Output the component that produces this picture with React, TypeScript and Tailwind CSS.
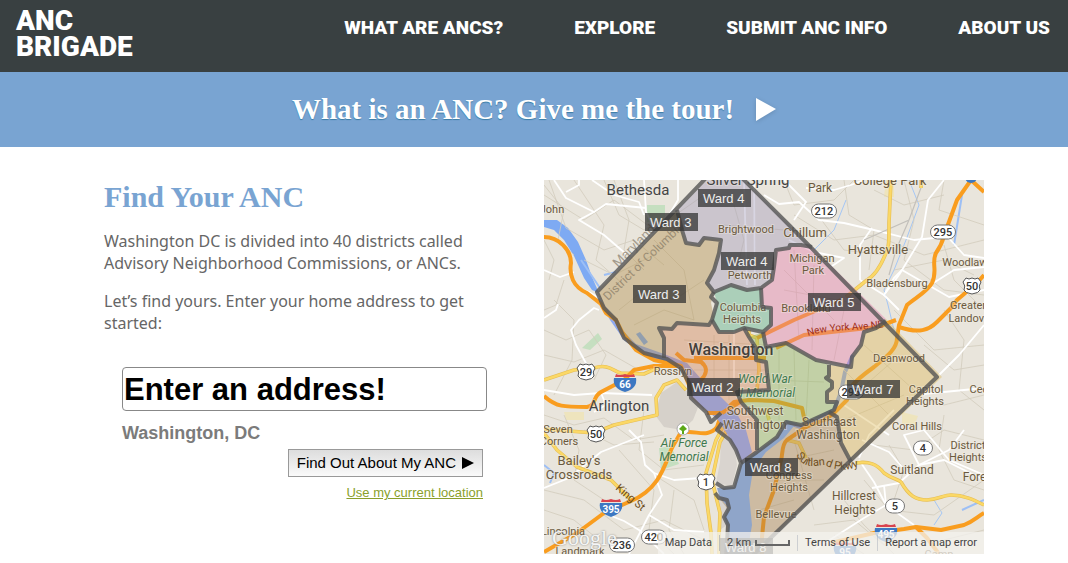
import React from 'react';

const NAV_LINKS = ['WHAT ARE ANCS?', 'EXPLORE', 'SUBMIT ANC INFO', 'ABOUT US'];

const LOCAL_STREETS = [
  'M0 15L40 40L70 20L110 50L160 15', 'M5 0L22 48L60 70L90 60L120 85', 'M30 0L60 45L52 80L80 105', 'M60 0L75 35L100 50L130 30',
  'M0 150L22 160L45 150L62 175L50 200', 'M0 175L30 182L60 170L95 190', 'M10 120L30 140L28 180L10 215', 'M0 235L30 245L60 238L90 260L120 255',
  'M20 235L35 270L30 300L60 320', 'M0 310L40 320L80 350L120 340L160 360', 'M100 230L95 270L120 290L160 285', 'M75 270L110 310L105 350L130 374',
  'M110 295L150 320L160 350', 'M240 0L250 25L290 20L310 0', 'M250 35L290 60L330 55L380 75L440 60', 'M300 0L305 35L330 50L325 90',
  'M360 0L370 40L360 80L400 110L440 115', 'M400 0L395 30L440 45', 'M350 90L400 80L430 95', 'M350 130L390 170L440 165', 'M400 130L420 160L415 210L440 230',
  'M370 215L400 225L440 215', 'M330 265L370 270L400 250L440 260', 'M320 300L345 330L390 335L440 300', 'M300 320L320 345L350 374',
  'M345 265L360 290L350 320', 'M270 345L310 340L340 365', 'M400 235L395 270L410 300L440 310', 'M75 130L100 110L130 120L160 100',
  'M90 145L120 130L150 140', 'M190 25L200 60L190 100', 'M210 20L212 100', 'M180 45L240 50', 'M240 90L290 140', 'M250 70L255 160', 'M270 85L268 170',
  'M240 110L320 125', 'M300 130L290 180', 'M140 160L220 165', 'M150 190L222 190', 'M170 155L170 210', 'M185 155L185 220', 'M235 170L235 240',
  'M250 170L252 240', 'M265 180L262 240', 'M225 200L280 202', 'M300 190L350 240', 'M320 165L370 210', 'M310 215L350 180', 'M300 240L360 215',
  'M220 285L290 270', 'M230 300L280 300', 'M250 260L270 330', 'M215 330L250 320', 'M0 5L20 30L14 60L30 75', 'M40 80L70 95L110 75', 'M20 100L12 125L0 130',
  'M70 0L85 40L80 70L100 90', 'M110 60L140 90L150 140', 'M0 60L10 80L5 100', 'M40 250L70 265L110 262', 'M0 330L30 340L55 360', 'M130 310L125 350L140 374',
  'M270 30L300 70L340 75', 'M330 10L360 25L400 15', 'M400 65L410 100L440 130', 'M380 165L410 190L440 185', 'M290 355L320 374', 'M400 360L440 350',
];

const WHITE_ROADS = [
  'M10 0L22 18L42 28L50 32L35 40L60 55L82 74', 'M22 12L35 5L35 0', 'M50 32L62 24L102 28', 'M48 0L70 15L95 22L100 35', 'M100 0L102 32L110 48',
  'M134 0L134 20L125 35', 'M0 90L16 97L30 92', 'M32 107L45 112L55 118', 'M0 138L12 130L14 124', 'M55 130L50 128L35 140L27 150L32 165L43 185',
  'M0 210L30 215L57 213L108 215', 'M57 213L62 225L50 232', 'M0 308L25 298L57 272L100 255', 'M85 250L97 262L101 285L110 293L118 315L105 335L85 374',
  'M110 293L130 300L157 298', 'M60 333L80 341L95 350L120 374', 'M105 335L130 350L160 352', 'M220 15L235 24L255 22L275 40L300 43L330 50L370 60L400 57',
  'M240 0L262 22L250 40', 'M262 8L290 10L307 5L320 0', 'M400 0L384 20L378 57L355 95', 'M328 48L316 65L316 100', 'M285 88L300 78L270 72L245 60',
  'M316 100L340 115L350 98L358 90L405 117L440 110', 'M355 95L340 115L355 130', 'M402 55L420 75L440 78', 'M383 107L410 90L440 87',
  'M440 145L415 175L393 197L380 215', 'M378 214L400 212L440 208', 'M315 278L325 255L350 230', 'M315 280L330 302L342 325L370 345',
  'M328 308L355 303L375 285L405 270L420 250', 'M375 285L400 280L440 300', 'M318 260L345 272L365 295', 'M340 305L342 325L320 338L270 370',
  'M375 285L360 255L380 250L405 280L440 295',
  'M210 0L211 105', 'M200 0L203 105', 'M190 150L190 200', 'M300 225L330 245L345 255',
];

const YELLOW_ROADS = [
  'M347 0L345 43C345 60 345 68 342 73C336 88 330 96 323 100L302 117',
  'M312 283C325 281 333 284 340 293C348 299 354 299 357 302C365 316 372 320 383 320C395 319 400 315 407 315C420 315 430 320 440 325',
  'M0 200L30 190L50 188C65 183 70 192 77 193L100 194L113 188', 'M0 253L13 270L33 287L67 300L87 320',
  'M0 249L50 253L70 245L113 235L112 218L120 205L133 200L142 210', 'M180 245L172 260L162 293L163 323L167 353L168 374',
  'M183 250L176 262L168 300L176 333L175 357L175 374', 'M213 158L205 155L205 150', 'M213 158L215 190L213 210', 'M222 228L225 240',
  'M243 260L255 263L262 278', 'M377 0L377 8',
];

const HIGHWAYS = [
  'M0 57C15 57 27 70 27 83C25 95 29 107 43 113L57 124L62 133L72 140L78 152L92 170L110 180L137 186',
  'M0 216C12 227 20 227 43 227C53 225 48 217 57 212L80 200L90 190L110 186L137 186L145 205L165 226L178 233L173 247C165 257 155 252 145 252L137 252C133 260 130 263 127 270C120 287 115 309 87 321L60 333L33 353L0 372',
  'M178 233L190 222L205 220L230 221L258 228L262 247L243 260C237 265 239 275 237 280L230 310L220 337L218 357L218 374',
  'M262 247L280 240L290 233L303 220C305 211 302 207 330 187C345 175 353 168 353 158L355 145L363 125C371 118 383 112 388 103C394 91 387 83 392 73C401 60 399 55 402 50L413 20L427 0L440 12',
  'M355 147C375 154 385 150 393 142L407 128L413 120L433 103L440 95',
  'M287 363L330 353L360 349L372 347L397 350L420 345C430 341 434 336 440 333', 'M372 347L383 358L395 374', 'M150 178L222 178',
  'M132 173L140 180L157 182C165 188 162 195 157 200', 'M213 158L250 140L297 120', 'M232 168L260 155L333 147L352 140', 'M160 185L153 177',
];

const WARDS = [
  { id: 'w3', fill: '#af8c46', d: 'M53 112L133 30L138 50L142 63L155 65L160 58L177 60L175 73L170 90L163 103L170 112L167 123L170 137L165 145L133 143L128 149L115 148L120 158L120 178L100 173L80 158L72 140L60 128Z' },
  { id: 'w4', fill: '#9d96b6', d: 'M133 30L163 0L200 0L268 67L257 65L246 67L232 70L230 87L228 100L217 108L203 110L187 105L170 112L163 103L170 90L175 73L177 60L160 58L155 65L142 63Z' },
  { id: 'w5', fill: '#e47aaa', d: 'M232 70L246 67L257 65L268 67L342 139L332 148L320 152L317 165L308 177L307 187L272 180L242 163L222 167L219 153L227 145L227 128L218 127L217 108L228 100L230 87Z' },
  { id: 'w1', fill: '#4eaf84', d: 'M170 112L187 105L203 110L217 108L218 127L227 128L227 145L219 152L200 148L190 152L175 152L168 140L173 123Z' },
  { id: 'w2', fill: '#d28252', d: 'M115 148L128 149L133 143L165 145L168 140L175 152L190 152L200 148L205 157L212 168L212 180L222 182L225 210L193 212L197 222L213 240L213 271L197 283L192 270L186 260L173 250L178 233L162 232L147 218L145 203L137 188L120 178L120 158Z' },
  { id: 'w6', fill: '#87b255', d: 'M205 157L219 152L222 167L242 163L272 180L285 185L285 196L288 202L288 208L283 212L283 222L293 222L290 230L257 245L242 242L233 257L213 271L213 240L197 222L193 212L225 210L222 182L212 180L212 168Z' },
  { id: 'w7', fill: '#dcb655', d: 'M342 139L398 197L307 282L297 263L293 235L290 230L293 222L283 222L283 212L288 208L288 202L285 196L285 185L307 187L308 177L317 165L320 152L332 148Z' },
  { id: 'w8', fill: '#a37d4b', d: 'M290 230L293 235L297 263L307 282L211 374L182 374L182 347L183 328L175 318L180 308L190 307L197 283L233 257L242 242L257 245Z' },
];

const WARD_BORDERS = [
  'M163 -3L53 112L60 128L72 140L80 158L100 173L123 179L137 188L145 203L147 218L162 232L167 242L177 233',
  'M197 -3L246 46L320 122L393 197L340 248L206 378',
  'M133 30L138 50L142 63L155 65L160 58L177 60L175 73L170 90L163 103L170 112L187 105L203 110L217 108L228 100L230 87L232 70L245 68L246 65L257 65L268 67',
  'M170 112L167 117L173 123L168 140L165 145L133 143L128 149L115 148L120 158L120 178', 'M168 140L175 152L190 152L200 148L219 152L227 145L227 128L218 127L217 108',
  'M219 152L222 167L242 163L272 180L307 187L308 177L317 165L320 152L332 148L342 141', 'M200 148L205 157L212 168L212 180L222 182L225 210L193 212L197 222L213 240L213 270',
  'M285 185L285 196L282 198L288 202L288 208L283 212L283 222L293 222L290 230L257 245L242 242L233 257L213 272L197 283',
  'M285 232L293 237L297 263L307 282', 'M178 243L173 250L186 260L192 270L197 283L190 307L180 308L172 303', 'M171 313L175 318L183 320L185 328L180 337L184 345L182 378',
];

interface PlaceLabel {
  x: number;
  y: number;
  text: string;
  size?: number;
  color?: string;
  italic?: boolean;
  weight?: number;
}

const TOWN = '#6b5a3e';
const PARK = '#3f7a4f';

const PLACES: PlaceLabel[] = [
  { x: 94, y: 15, text: 'Bethesda', size: 15, color: '#444' },
  { x: 204, y: 5, text: 'Silver Spring', size: 15, color: '#444' },
  { x: 8, y: 33, text: 'John' },
  { x: 202, y: 53, text: 'Brightwood' },
  { x: 276, y: 12, text: 'Park', size: 12 },
  { x: 346, y: 5, text: 'College Park', size: 13 },
  { x: 261, y: 57, text: 'Chillum', size: 13 },
  { x: 334, y: 74, text: 'Hyattsville', size: 13 },
  { x: 268, y: 82, text: 'Michigan' },
  { x: 269, y: 94, text: 'Park' },
  { x: 206, y: 99, text: 'Petworth' },
  { x: 353, y: 107, text: 'Bladensburg' },
  { x: 424, y: 86, text: 'Woodlawn' },
  { x: 424, y: 129, text: 'Greater' },
  { x: 427, y: 142, text: 'Landover' },
  { x: 199, y: 131, text: 'Columbia' },
  { x: 198, y: 143, text: 'Heights' },
  { x: 262, y: 132, text: 'Brookland' },
  { x: 187, y: 175, text: 'Washington', size: 16, color: '#443f3a', weight: 500 },
  { x: 129, y: 195, text: 'Rosslyn' },
  { x: 75, y: 231, text: 'Arlington', size: 15, color: '#444' },
  { x: 221, y: 203, text: 'World War', size: 12, color: PARK, italic: true },
  { x: 222, y: 217, text: 'II Memorial', size: 12, color: PARK, italic: true },
  { x: 211, y: 235, text: 'Southwest', size: 12 },
  { x: 211, y: 249, text: 'Washington', size: 12 },
  { x: 285, y: 246, text: 'Southeast', size: 12 },
  { x: 284, y: 259, text: 'Washington', size: 12 },
  { x: 355, y: 182, text: 'Deanwood' },
  { x: 382, y: 213, text: 'Capitol' },
  { x: 381, y: 225, text: 'Heights' },
  { x: 440, y: 213, text: 'Cedar' },
  { x: 373, y: 250, text: 'Coral Hills' },
  { x: 424, y: 269, text: 'District' },
  { x: 424, y: 281, text: 'Heights' },
  { x: 446, y: 301, text: 'Forestville', size: 12 },
  { x: 368, y: 294, text: 'Suitland', size: 12 },
  { x: 310, y: 320, text: 'Hillcrest', size: 12 },
  { x: 311, y: 334, text: 'Heights', size: 12 },
  { x: 14, y: 253, text: 'Seven' },
  { x: 15, y: 265, text: 'Corners' },
  { x: 35, y: 285, text: "Bailey's", size: 13 },
  { x: 35, y: 299, text: 'Crossroads', size: 13 },
  { x: 140, y: 267, text: 'Air Force', size: 12, color: PARK, italic: true },
  { x: 140, y: 281, text: 'Memorial', size: 12, color: PARK, italic: true },
  { x: 245, y: 299, text: 'Congress' },
  { x: 245, y: 311, text: 'Heights' },
  { x: 232, y: 338, text: 'Bellevue' },
  { x: 19, y: 355, text: 'Lincolnia' },
  { x: 36, y: 375, text: 'Landmark' },
  { x: 395, y: 378, text: 'Camp' },
];

const ROUTE_PILLS = [
  { x: 280, y: 31, text: '212' },
  { x: 399, y: 52, text: '295' },
  { x: 307, y: 212, text: '295' },
  { x: 379, y: 268, text: '4' },
  { x: 351, y: 326, text: '5' },
  { x: 78, y: 365, text: '236' },
  { x: 110, y: 357, text: '420' },
];

const US_SHIELDS = [
  { x: 428, y: 106, text: '50' },
  { x: 42, y: 192, text: '29' },
  { x: 52, y: 254, text: '50' },
  { x: 162, y: 302, text: '1' },
];

const INTERSTATES = [
  { x: 81, y: 203, text: '66' },
  { x: 67, y: 328, text: '395' },
  { x: 342, y: 353, text: '495' },
  { x: 301, y: 371, text: '95' },
];

const WARD_LABELS = [
  { x: 154, y: 9, text: 'Ward 4' },
  { x: 101, y: 33, text: 'Ward 3' },
  { x: 177, y: 72, text: 'Ward 4' },
  { x: 89, y: 105, text: 'Ward 3' },
  { x: 264, y: 113, text: 'Ward 5' },
  { x: 143, y: 198, text: 'Ward 2' },
  { x: 303, y: 200, text: 'Ward 7' },
  { x: 201, y: 278, text: 'Ward 8' },
  { x: 176, y: 358, text: 'Ward 8' },
];

const MapDrawing: React.FC = () => (
  <svg
    viewBox="0 0 440 374"
    className="block w-full font-['Roboto',sans-serif]"
    role="img"
    aria-label="Map of the wards of Washington DC"
  >
    <rect width="440" height="374" fill="#e9e5dc" />

    {/* Parks, built-up areas and water */}
    <path d="M103 25h18v17h-18zM38 168l16-15 4 6-12 11zM115 268l12-2 8 18-18 6z" fill="#c5dfc0" />
    <path d="M342 0h8v17h-10zM20 232h20v8H22zM358 232l16 4-4 10-12-2z" fill="#f2e2a8" opacity="0.6" />
    <path d="M117 213L133 202L146 214L155 225L149 240L138 250L120 247L111 235Z" fill="#d6d1ca" />
    <path d="M0 40L13 40L24 48L34 62L42 80L48 97L55 113L48 110L40 98L30 76L20 60L10 50L0 47Z" fill="#7eaaf3" />
    <path d="M37 80L56 108M60 95l12-3M0 285l10 8 -4 10M410 65l8-50M418 330l22-10" fill="none" stroke="#9dbff5" strokeWidth="2" />
    <path d="M52 114L64 130L76 148L92 164L120 174L143 183L158 200L160 212L160 230L147 216L144 198L132 187L100 176L80 160L66 140Z" fill="#8fa9ee" />
    <path d="M242 242L257 247L290 230L297 212L301 192L309 175" fill="none" stroke="#86a5ea" strokeWidth="4" />
    <path d="M177 258L190 262L193 285L188 306L172 303L176 282ZM175 320L184 322L183 345L176 350Z" fill="#d9d4cf" />
    <path d="M365 0L375 25L362 60L350 90L340 110L344 125L350 150L357 162M302 20L290 50L270 70M390 320L398 333L390 345" fill="none" stroke="#a4c6f5" strokeWidth="1" />
    <path d="M92 154l4-2 8 10-4 3z" fill="#7eaaf3" />

    {/* Roads */}
    {LOCAL_STREETS.map((d) => (
      <path key={d} d={d} fill="none" stroke="#d2cbbd" strokeWidth="0.8" />
    ))}
    {WHITE_ROADS.map((d) => (
      <path key={d} d={d} fill="none" stroke="#fff" strokeWidth="1.8" strokeLinejoin="round" />
    ))}
    <path d="M365 40L352 70L345 95M378 5L365 40L320 60" fill="none" stroke="#c3c0bb" strokeWidth="1.2" />
    {YELLOW_ROADS.map((d) => (
      <g key={d} fill="none" strokeLinejoin="round">
        <path d={d} stroke="#e5bd55" strokeWidth="3.6" />
        <path d={d} stroke="#fbd866" strokeWidth="2.4" />
      </g>
    ))}
    {HIGHWAYS.map((d) => (
      <path key={d} d={d} fill="none" stroke="#f99d1f" strokeWidth="4" strokeLinejoin="round" />
    ))}

    {/* Ward fills, with the rivers that run through them */}
    {WARDS.map((w) => (
      <path key={w.id} d={w.d} fill={w.fill} fillOpacity="0.4" />
    ))}
    <path d="M149 206L162 204L178 218L192 232L202 250L208 272L197 283L191 268L182 252L174 240L160 228L149 216Z" fill="#9f9fca" />
    <path d="M197 283L233 257L242 243L250 246L240 258L222 272L209 290L205 315L208 345L203 374L182 374L184 347L180 337L185 328L176 318L173 308L190 307Z" fill="#8fa5c9" />
    <path d="M163 233L178 233M196 222L178 233" fill="none" stroke="#e8912f" strokeWidth="4" />

    {/* Place names */}
    {PLACES.map((p) => (
      <text
        key={`${p.text}-${p.x}-${p.y}`}
        x={p.x}
        y={p.y}
        fontSize={p.size ?? 11}
        fontWeight={p.weight ?? 400}
        fontStyle={p.italic ? 'italic' : 'normal'}
        fill={p.color ?? TOWN}
        textAnchor="middle"
        stroke="#f3efe7"
        strokeWidth="2"
        strokeOpacity="0.4"
        paintOrder="stroke"
      >
        {p.text}
      </text>
    ))}
    <text transform="translate(74 88) rotate(-45)" fontSize="13" fill="#a39a8b">Maryland</text>
    <text transform="translate(64 121) rotate(-44)" fontSize="12" fill="#9b8d74">District of Columbia</text>
    <text transform="translate(71 309) rotate(40)" fontSize="11" fill="#70501e">King St</text>
    <defs>
      <path id="suitland" d="M252 275C260 289 268 286 280 285C292 290 300 292 316 286" />
      <path id="new-york" d="M264 156C290 148 310 152 342 147" />
    </defs>
    <text fontSize="11" fill="#70501e"><textPath href="#suitland">Suitland Pkwy</textPath></text>
    <text fontSize="10" fill="#a03020"><textPath href="#new-york">New York Ave NE</textPath></text>

    {/* Route markers */}
    {ROUTE_PILLS.map((r) => {
      const width = r.text.length > 1 ? 25 : 19;
      return (
        <g key={`${r.text}-${r.x}`}>
          <rect x={r.x - width / 2} y={r.y - 7} width={width} height="14" rx="7" fill="#fff" stroke="#777" />
          <text x={r.x} y={r.y + 4} fontSize="11" fontWeight="500" fill="#333" textAnchor="middle">{r.text}</text>
        </g>
      );
    })}
    {US_SHIELDS.map((r) => (
      <g key={`${r.text}-${r.x}`}>
        <path
          transform={`translate(${r.x} ${r.y})`}
          d="M-6-8Q-3-6 0-8Q3-6 6-8L9-4Q6 0 8 4Q7 7 0 8Q-7 7-8 4Q-6 0-9-4Z"
          fill="#fff"
          stroke="#555"
        />
        <text x={r.x} y={r.y + 4} fontSize="11" fontWeight="500" fill="#333" textAnchor="middle">{r.text}</text>
      </g>
    ))}
    {INTERSTATES.map((r) => (
      <g key={r.text}>
        <path transform={`translate(${r.x} ${r.y})`} d="M-9-9Q-5-7 0-9Q5-7 9-9L10-6H-10Z" fill="#d8434e" />
        <path transform={`translate(${r.x} ${r.y})`} d="M-11-5H11Q13 5 0 9Q-13 5-11-5Z" fill="#3d78c2" />
        <text x={r.x} y={r.y + 5} fontSize="10" fontWeight="700" fill="#fff" textAnchor="middle">{r.text}</text>
      </g>
    ))}
    <circle cx="427" cy="-3" r="6" fill="#3d78c2" />
    <circle cx="139" cy="249" r="6" fill="#fff" stroke="#aaa" />
    <path d="M139 245l4 4-3 2v3h-2v-3l-3-2z" fill="#5ba818" />

    {/* Ward borders and labels */}
    {WARD_BORDERS.map((d) => (
      <path key={d} d={d} fill="none" stroke="#555" strokeOpacity="0.8" strokeWidth="4" strokeLinejoin="round" />
    ))}
    {WARD_LABELS.map((l) => (
      <g key={`${l.x}-${l.y}`}>
        <rect x={l.x} y={l.y} width="53" height="18" fill="#333" fillOpacity="0.75" />
        <text x={l.x + 5} y={l.y + 14} fontSize="13" fill="#eee" className="font-['Liberation_Sans',sans-serif]">
          {l.text}
        </text>
      </g>
    ))}
  </svg>
);

const WardMap: React.FC = () => (
  <div className="relative overflow-hidden">
    <MapDrawing />
    <a
      href="#google"
      className="absolute bottom-1 left-2 font-['Liberation_Serif',serif] text-[22px] leading-6 text-white/90 [text-shadow:0_0_2px_#777]"
    >
      Google
    </a>
    <div className="absolute right-0 bottom-0 flex h-[22px] items-center bg-[#f3f1ee]/75 font-['Roboto',sans-serif] text-[11px] text-[#444]">
      <button type="button" className="px-[7px]">Map Data</button>
      <span className="flex items-center gap-1 border-l border-gray-400/60 px-[7px]">
        2 km
        <span className="h-[6px] w-[35px] border-2 border-t-0 border-[#666]" />
      </span>
      <a href="#terms" className="border-l border-gray-400/40 px-[7px]">Terms of Use</a>
      <a href="#report" className="border-l border-gray-400/40 px-[7px]">Report a map error</a>
    </div>
  </div>
);

const Header: React.FC = () => (
  <header className="flex h-[72px] items-start justify-between bg-[#394041] pr-[18px] pl-4 font-['Roboto',sans-serif] font-black text-white">
    <a href="#home" className="pt-2 text-[28px] leading-[26px]">
      ANC
      <br />
      BRIGADE
    </a>
    <nav className="flex gap-[71px] pt-4 text-[19px] leading-6 whitespace-nowrap">
      {NAV_LINKS.map((label) => (
        <a key={label} href="#nav">{label}</a>
      ))}
    </nav>
  </header>
);

const AddressForm: React.FC = () => (
  <form className="mt-[33px] ml-[18px] w-[365px] font-['Liberation_Sans',sans-serif]" onSubmit={(e) => e.preventDefault()}>
    <input
      type="text"
      aria-label="Home address"
      defaultValue="Enter an address!"
      className="block h-11 w-full rounded border border-[#888] px-px pt-[2px] text-[31px] font-bold text-black"
    />
    <p className="mt-[10px] text-lg leading-6 font-bold text-[#7b7b7b]">Washington, DC</p>
    <div className="mt-1 flex flex-col items-end pr-1">
      <button
        type="submit"
        className="flex h-7 items-center gap-[6px] border border-[#999] bg-gradient-to-b from-[#ddd] to-[#fafafa] px-2 text-[15px] text-black"
      >
        Find Out About My ANC
        <svg viewBox="0 0 12 12" className="h-3 w-3" fill="currentColor" aria-hidden="true">
          <path d="M0 0L12 6L0 12Z" />
        </svg>
      </button>
      <a href="#locate" className="mt-[6px] text-[13px] leading-5 text-[#8a9f2b] underline">Use my current location</a>
    </div>
  </form>
);

export default function App() {
  return (
    <div className="min-h-screen bg-white">
      <Header />

      {/* Tour banner */}
      <a
        href="#tour"
        className="flex h-[75px] items-center justify-center gap-[22px] bg-[#79a4d2] font-['Liberation_Serif',serif] text-[29px] font-bold text-white [text-shadow:0_1px_1px_#3a7ca5]"
      >
        What is an ANC? Give me the tour!
        <svg viewBox="0 0 20 23" className="h-[23px] w-5 drop-shadow-sm" fill="currentColor" aria-hidden="true">
          <path d="M0 0L20 11L0 23Z" />
        </svg>
      </a>

      <main className="mx-auto grid max-w-[900px] grid-cols-2 pt-[33px] pl-5">
        <section>
          <h2 className="font-['Liberation_Serif',serif] text-[30px] leading-[34px] font-bold text-[#79a4d2]">Find Your ANC</h2>
          <div className="mt-4 space-y-4 pr-14 font-['Noto_Sans',sans-serif] text-base leading-[22px] text-[#666]">
            <p>Washington DC is divided into 40 districts called Advisory Neighborhood Commissions, or ANCs.</p>
            <p>Let’s find yours. Enter your home address to get started:</p>
          </div>
          <AddressForm />
        </section>
        <WardMap />
      </main>
    </div>
  );
}
